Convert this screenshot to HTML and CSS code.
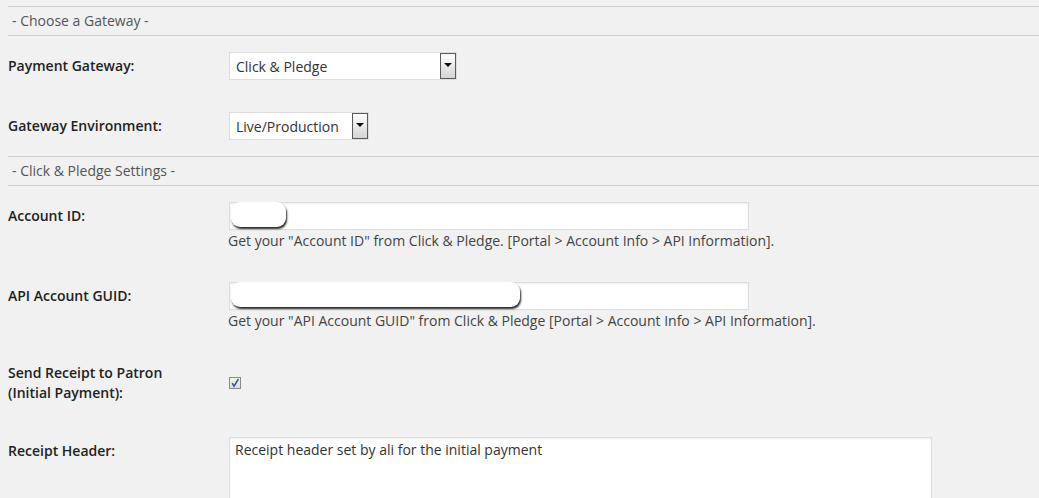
FILE: index.html
```html
<html>
  <head>
    <meta charset="utf-8" />
    <link rel="stylesheet" href="styles.css">
  </head>
  <body>
    <form class="gatewaySettings">
      <div class="gatewaySettings__section">- Choose a Gateway -</div>
      <table class="formTable">
        <tr>
          <th><label for="gateway">Payment Gateway:</label></th>
          <td>
            <span class="selectBox selectBox--wide">
              <select id="gateway" class="selectBox__select">
                <option>Click &amp; Pledge</option>
              </select>
              <span class="selectBox__arrow"></span>
            </span>
          </td>
        </tr>
        <tr>
          <th><label for="environment">Gateway Environment:</label></th>
          <td>
            <span class="selectBox selectBox--narrow">
              <select id="environment" class="selectBox__select">
                <option>Live/Production</option>
              </select>
              <span class="selectBox__arrow"></span>
            </span>
          </td>
        </tr>
      </table>

      <div class="gatewaySettings__section">- Click &amp; Pledge Settings -</div>
      <table class="formTable">
        <tr>
          <th><label for="account-id">Account ID:</label></th>
          <td>
            <span class="textField">
              <input id="account-id" class="textField__input" type="text" value="">
              <span class="textField__mask textField__mask--short"></span>
            </span>
            <p class="description">Get your "Account ID" from Click &amp; Pledge. [Portal &gt; Account Info &gt; API Information].</p>
          </td>
        </tr>
        <tr>
          <th><label for="account-guid">API Account GUID:</label></th>
          <td>
            <span class="textField">
              <input id="account-guid" class="textField__input" type="text" value="">
              <span class="textField__mask textField__mask--long"></span>
            </span>
            <p class="description">Get your "API Account GUID" from Click &amp; Pledge [Portal &gt; Account Info &gt; API Information].</p>
          </td>
        </tr>
        <tr class="formTable__row--check">
          <th><label for="send-receipt">Send Receipt to Patron<br>(Initial Payment):</label></th>
          <td>
            <span class="checkBox" id="send-receipt">
              <svg width="10" height="10" viewBox="0 0 10 10"><path d="M2.2 5.2 L4 8.2 L8.4 1" fill="none" stroke="#3451a8" stroke-width="1.5"/></svg>
            </span>
          </td>
        </tr>
        <tr>
          <th><label for="receipt-header">Receipt Header:</label></th>
          <td>
            <textarea id="receipt-header" class="textArea">Receipt header set by ali for the initial payment</textarea>
          </td>
        </tr>
      </table>
    </form>
  </body>
</html>
```

FILE: styles.css
```css
body {
  margin: 6px 0 0 8px;
  background-color: #f1f1f1;
  font-family: "Open Sans", sans-serif;
  font-size: 14px;
  color: #444;
  overflow: hidden;
}

.gatewaySettings__section {
  border-top: 1px solid #cfcfcf;
  border-bottom: 1px solid #cfcfcf;
  height: 28px;
  line-height: 28px;
  padding-left: 4px;
  color: #555;
}

.formTable {
  border-collapse: collapse;
  border-spacing: 0;
  font-size: 14px;
  color: #444;
}

.formTable th {
  width: 200px;
  padding: 20px 10px 20px 0;
  vertical-align: top;
  text-align: left;
  font-size: 14px;
  font-weight: 600;
  line-height: 20px;
  color: #222;
}

.formTable__row--check th {
  padding: 17px 10px 18px 0;
}

.formTable td {
  padding: 15px 10px;
  vertical-align: top;
  line-height: 20px;
}

/* select with the old style arrow button */
.selectBox {
  position: relative;
  display: block;
  margin: 1px;
}

.selectBox--wide { width: 228px; }
.selectBox--narrow { width: 140px; }

.selectBox__select {
  -webkit-appearance: none;
  appearance: none;
  box-sizing: border-box;
  display: block;
  width: 100%;
  height: 28px;
  margin: 0;
  padding: 0 20px 0 6px;
  border: 1px solid #ddd;
  border-radius: 0;
  background-color: #fff;
  font-family: "Open Sans", sans-serif;
  font-size: 14px;
  color: #333;
  outline: none;
}

.selectBox__arrow {
  position: absolute;
  top: 1px;
  right: 1px;
  box-sizing: border-box;
  width: 16px;
  height: 26px;
  border: 1px solid #5a5a5a;
  background: linear-gradient(#fff, #d4d4d4);
  pointer-events: none;
}

.selectBox__arrow:after {
  content: "";
  position: absolute;
  top: 9px;
  left: 3px;
  border-left: 4px solid transparent;
  border-right: 4px solid transparent;
  border-top: 4px solid #111;
}

/* text inputs */
.textField {
  position: relative;
  display: block;
  width: 520px;
  margin: 1px;
}

.textField__input {
  box-sizing: border-box;
  display: block;
  width: 520px;
  height: 28px;
  margin: 0;
  padding: 3px 6px;
  border: 1px solid #ddd;
  background-color: #fff;
  box-shadow: inset 0 1px 2px rgba(0,0,0,.07);
  font-family: "Open Sans", sans-serif;
  font-size: 14px;
}

.textField__mask {
  position: absolute;
  top: 0;
  left: 2px;
  height: 25px;
  background-color: #fff;
  border-radius: 9px;
  box-shadow: 1px 2px 2px rgba(0,0,0,.85);
}

.textField__mask--short { width: 55px; }
.textField__mask--long { width: 289px; }

.description {
  margin: 0;
  font-size: 14px;
  line-height: 20px;
  color: #444;
}

/* checkbox */
.checkBox {
  display: block;
  box-sizing: border-box;
  width: 12px;
  height: 12px;
  margin: 16px 0 0 1px;
  border: 1px solid #8a8a8a;
  background: linear-gradient(#f4f4f4, #dcdcdc);
}

.checkBox svg {
  display: block;
}

.textArea {
  box-sizing: border-box;
  display: block;
  width: 703px;
  height: 90px;
  margin: 1px;
  padding: 2px 5px;
  border: 1px solid #ddd;
  background-color: #fff;
  box-shadow: inset 0 1px 2px rgba(0,0,0,.07);
  font-family: "Open Sans", sans-serif;
  font-size: 14px;
  color: #333;
  resize: none;
}
```
